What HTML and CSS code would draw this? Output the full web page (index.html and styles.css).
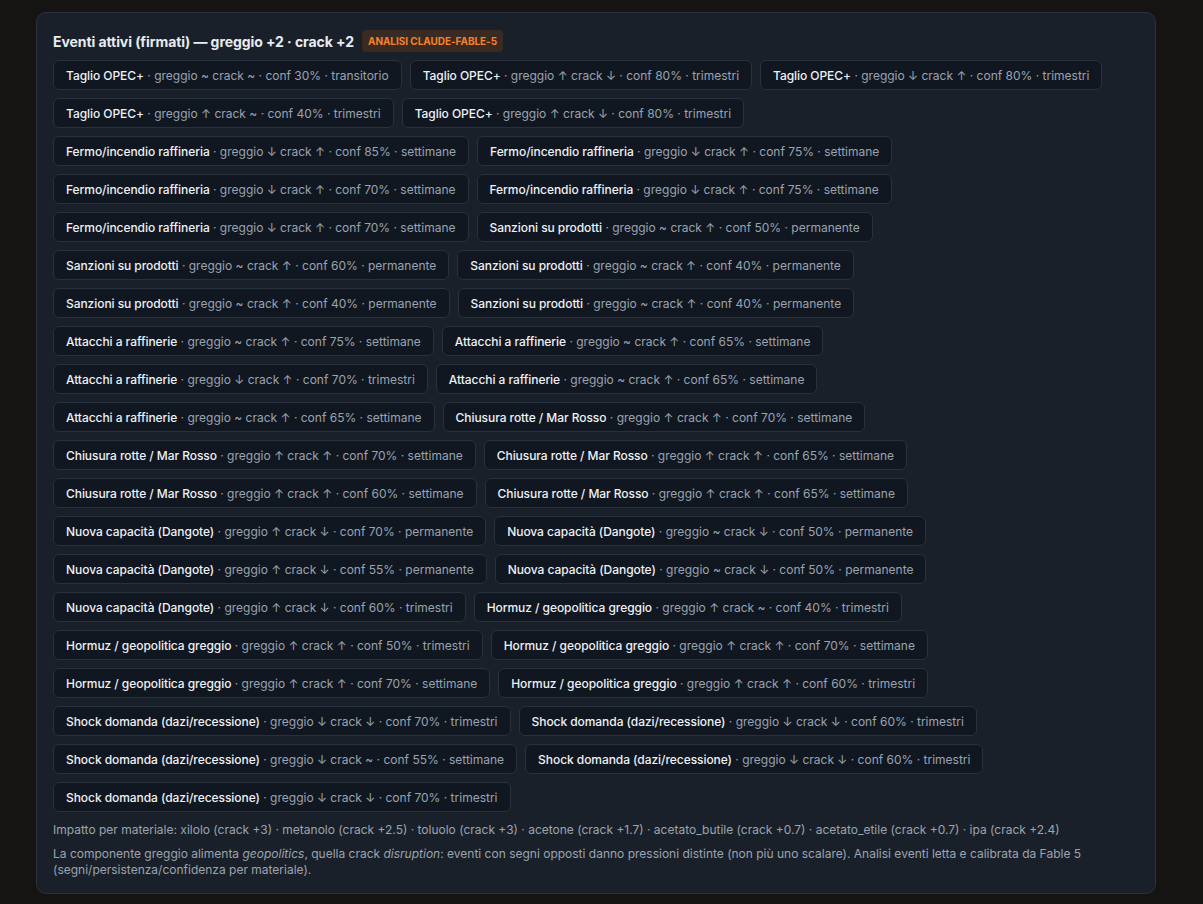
FILE: index.html
```html
<!DOCTYPE html>
<html lang="it">
<head>
  <meta charset="UTF-8">
  <meta name="viewport" content="width=device-width, initial-scale=1.0">
  <title>Eventi attivi</title>
  <link rel="stylesheet" href="styles.css">
</head>
<body>
  <section class="events-card">
    <h2 class="events-title">Eventi attivi (firmati) — greggio +2 · crack +2 <span class="badge">Analisi claude-fable-5</span></h2>

    <div class="chips">
      <div class="chip"><b>Taglio OPEC+</b> · greggio ~ crack ~ · conf 30% · transitorio</div>
      <div class="chip"><b>Taglio OPEC+</b> · greggio ↑ crack ↓ · conf 80% · trimestri</div>
      <div class="chip"><b>Taglio OPEC+</b> · greggio ↓ crack ↑ · conf 80% · trimestri</div>
      <div class="chip"><b>Taglio OPEC+</b> · greggio ↑ crack ~ · conf 40% · trimestri</div>
      <div class="chip"><b>Taglio OPEC+</b> · greggio ↑ crack ↓ · conf 80% · trimestri</div>
      <div class="chip"><b>Fermo/incendio raffineria</b> · greggio ↓ crack ↑ · conf 85% · settimane</div>
      <div class="chip"><b>Fermo/incendio raffineria</b> · greggio ↓ crack ↑ · conf 75% · settimane</div>
      <div class="chip"><b>Fermo/incendio raffineria</b> · greggio ↓ crack ↑ · conf 70% · settimane</div>
      <div class="chip"><b>Fermo/incendio raffineria</b> · greggio ↓ crack ↑ · conf 75% · settimane</div>
      <div class="chip"><b>Fermo/incendio raffineria</b> · greggio ↓ crack ↑ · conf 70% · settimane</div>
      <div class="chip"><b>Sanzioni su prodotti</b> · greggio ~ crack ↑ · conf 50% · permanente</div>
      <div class="chip"><b>Sanzioni su prodotti</b> · greggio ~ crack ↑ · conf 60% · permanente</div>
      <div class="chip"><b>Sanzioni su prodotti</b> · greggio ~ crack ↑ · conf 40% · permanente</div>
      <div class="chip"><b>Sanzioni su prodotti</b> · greggio ~ crack ↑ · conf 40% · permanente</div>
      <div class="chip"><b>Sanzioni su prodotti</b> · greggio ~ crack ↑ · conf 40% · permanente</div>
      <div class="chip"><b>Attacchi a raffinerie</b> · greggio ~ crack ↑ · conf 75% · settimane</div>
      <div class="chip"><b>Attacchi a raffinerie</b> · greggio ~ crack ↑ · conf 65% · settimane</div>
      <div class="chip"><b>Attacchi a raffinerie</b> · greggio ↓ crack ↑ · conf 70% · trimestri</div>
      <div class="chip"><b>Attacchi a raffinerie</b> · greggio ~ crack ↑ · conf 65% · settimane</div>
      <div class="chip"><b>Attacchi a raffinerie</b> · greggio ~ crack ↑ · conf 65% · settimane</div>
      <div class="chip"><b>Chiusura rotte / Mar Rosso</b> · greggio ↑ crack ↑ · conf 70% · settimane</div>
      <div class="chip"><b>Chiusura rotte / Mar Rosso</b> · greggio ↑ crack ↑ · conf 70% · settimane</div>
      <div class="chip"><b>Chiusura rotte / Mar Rosso</b> · greggio ↑ crack ↑ · conf 65% · settimane</div>
      <div class="chip"><b>Chiusura rotte / Mar Rosso</b> · greggio ↑ crack ↑ · conf 60% · settimane</div>
      <div class="chip"><b>Chiusura rotte / Mar Rosso</b> · greggio ↑ crack ↑ · conf 65% · settimane</div>
      <div class="chip"><b>Nuova capacità (Dangote)</b> · greggio ↑ crack ↓ · conf 70% · permanente</div>
      <div class="chip"><b>Nuova capacità (Dangote)</b> · greggio ~ crack ↓ · conf 50% · permanente</div>
      <div class="chip"><b>Nuova capacità (Dangote)</b> · greggio ↑ crack ↓ · conf 55% · permanente</div>
      <div class="chip"><b>Nuova capacità (Dangote)</b> · greggio ~ crack ↓ · conf 50% · permanente</div>
      <div class="chip"><b>Nuova capacità (Dangote)</b> · greggio ↑ crack ↓ · conf 60% · trimestri</div>
      <div class="chip"><b>Hormuz / geopolitica greggio</b> · greggio ↑ crack ~ · conf 40% · trimestri</div>
      <div class="chip"><b>Hormuz / geopolitica greggio</b> · greggio ↑ crack ↑ · conf 50% · trimestri</div>
      <div class="chip"><b>Hormuz / geopolitica greggio</b> · greggio ↑ crack ↑ · conf 70% · settimane</div>
      <div class="chip"><b>Hormuz / geopolitica greggio</b> · greggio ↑ crack ↑ · conf 70% · settimane</div>
      <div class="chip"><b>Hormuz / geopolitica greggio</b> · greggio ↑ crack ↑ · conf 60% · trimestri</div>
      <div class="chip"><b>Shock domanda (dazi/recessione)</b> · greggio ↓ crack ↓ · conf 70% · trimestri</div>
      <div class="chip"><b>Shock domanda (dazi/recessione)</b> · greggio ↓ crack ↓ · conf 60% · trimestri</div>
      <div class="chip"><b>Shock domanda (dazi/recessione)</b> · greggio ↓ crack ~ · conf 55% · settimane</div>
      <div class="chip"><b>Shock domanda (dazi/recessione)</b> · greggio ↓ crack ↓ · conf 60% · trimestri</div>
      <div class="chip"><b>Shock domanda (dazi/recessione)</b> · greggio ↓ crack ↓ · conf 70% · trimestri</div>
    </div>

    <p class="note">Impatto per materiale: xilolo (crack +3) · metanolo (crack +2.5) · toluolo (crack +3) · acetone (crack +1.7) · acetato_butile (crack +0.7) · acetato_etile (crack +0.7) · ipa (crack +2.4)</p>
    <p class="note">La componente greggio alimenta <em>geopolitics</em>, quella crack <em>disruption</em>: eventi con segni opposti danno pressioni distinte (non più uno scalare). Analisi eventi letta e calibrata da Fable 5 (segni/persistenza/confidenza per materiale).</p>
  </section>
</body>
</html>
```

FILE: styles.css
```css
/* Base */
body {
  margin: 0;
  padding: 12px 0 0 36px;
  background: #151413;
  color: #e6e9ee;
  font-family: Inter, 'Noto Sans', sans-serif;
  font-size: 12px;
}

/* Card */
.events-card {
  width: 1120px;
  box-sizing: border-box;
  padding: 17px 16px 15px;
  background: #1a2029;
  border: 1px solid #29313c;
  border-radius: 10px;
}

.events-title {
  display: flex;
  align-items: center;
  gap: 8px;
  margin: 0 0 8px;
  font-size: 14px;
  font-weight: 700;
  letter-spacing: -0.07px;
  color: #e8ebf0;
}

.badge {
  padding: 6px 6px;
  border-radius: 4px;
  background: #3a2b22;
  color: #f5812c;
  font-size: 10px;
  font-weight: 700;
  line-height: 10px;
  text-transform: uppercase;
  letter-spacing: -0.05px;
}

/* Event chips */
.chips {
  display: flex;
  flex-wrap: wrap;
  gap: 8px;
}

.chip {
  height: 30px;
  box-sizing: border-box;
  display: flex;
  align-items: center;
  padding: 0 12px;
  background: #111721;
  border: 1px solid #29313c;
  border-radius: 6px;
  color: #9aa3b0;
  white-space: pre;
}

.chip b {
  font-weight: 500;
  letter-spacing: -0.06px;
  color: #eef1f5;
}

/* Footer notes */
.note {
  margin: 10px 0 0;
  line-height: 16px;
  color: #9ba4b0;
}

.note + .note {
  margin-top: 8px;
}
```
